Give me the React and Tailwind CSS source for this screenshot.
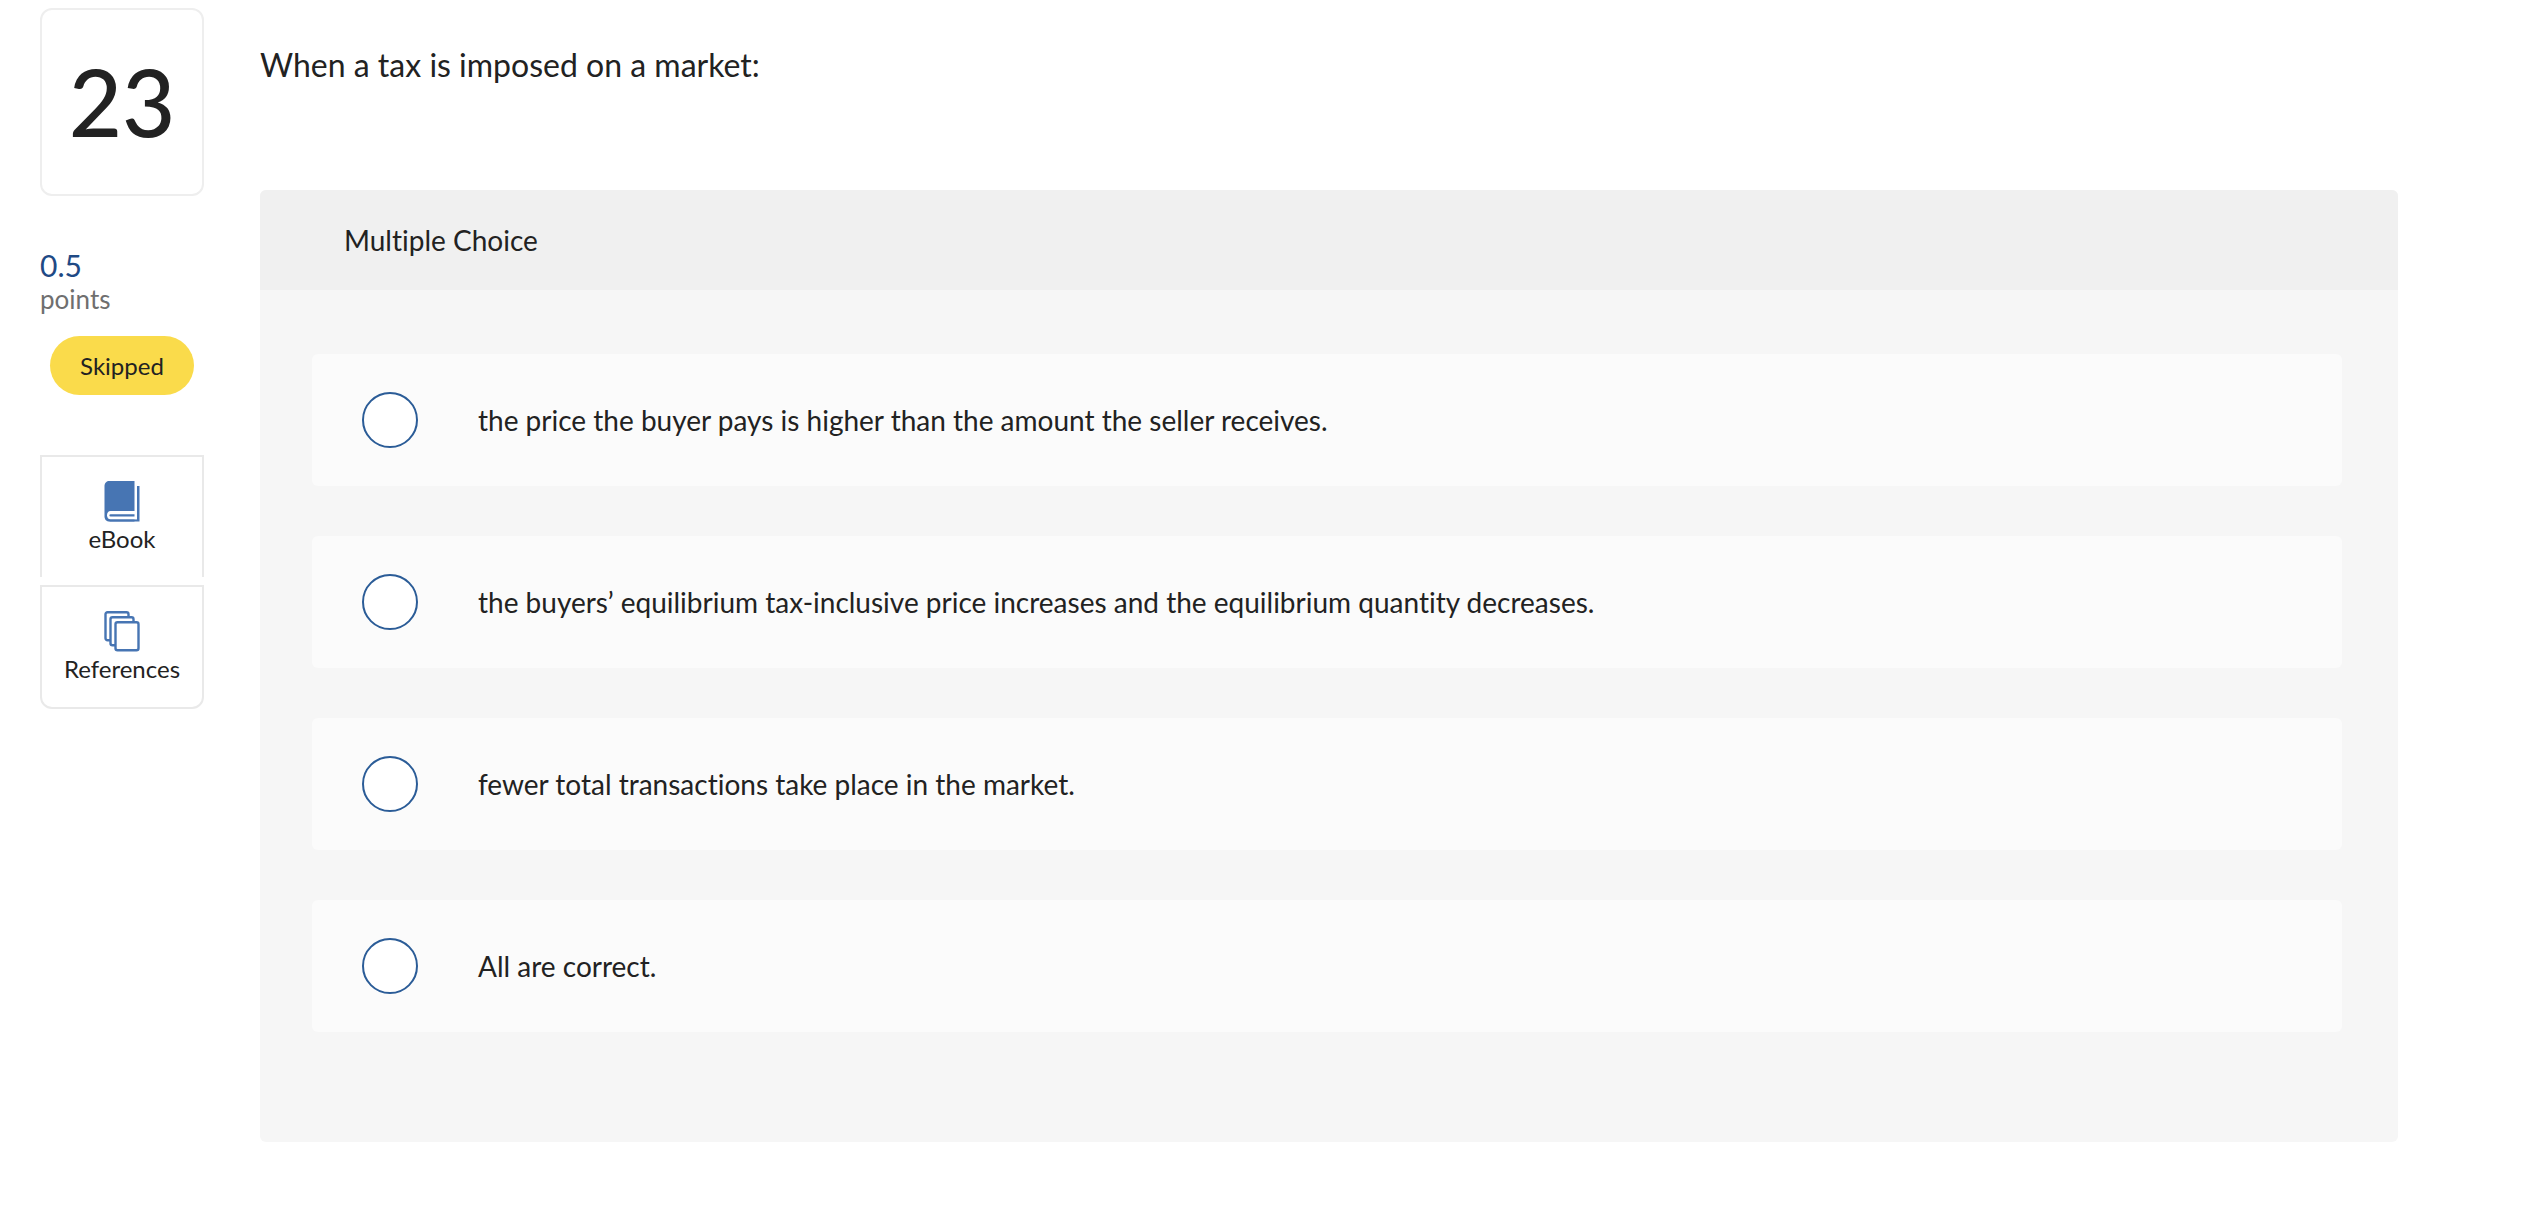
import { useState } from "react";

const OPTIONS = [
  "the price the buyer pays is higher than the amount the seller receives.",
  "the buyers’ equilibrium tax-inclusive price increases and the equilibrium quantity decreases.",
  "fewer total transactions take place in the market.",
  "All are correct.",
];

function BookIcon() {
  return (
    <svg width="36" height="42" viewBox="0 0 36 42" fill="#4775b3" aria-hidden="true">
      <path d="M5.5 0H30.5V40.5H5.5C2.5 40.5 .5 38.5 .5 35.5V5C.5 2 2.5 0 5.5 0Z" />
      <path d="M33 5H35.5V40.5H5.5V38.3H33Z" />
      <path d="M6.5 30H33V38.3H6.5C4.3 38.3 3 36.5 3 34.2C3 31.8 4.3 30 6.5 30Z" fill="#fff" />
      <path d="M6.5 33.2H30.5V35.5H6.5C5 35.5 5 33.2 6.5 33.2Z" />
    </svg>
  );
}

function PagesIcon() {
  return (
    <svg width="36" height="42" viewBox="0 0 36 42" fill="#fff" stroke="#4775b3" strokeWidth="2.4" aria-hidden="true">
      <rect x="1.5" y="1.2" width="23" height="28" rx="2" />
      <rect x="6.5" y="6.2" width="23" height="28" rx="2" />
      <rect x="11.5" y="11.2" width="23" height="28" rx="2" />
    </svg>
  );
}

function Sidebar() {
  return (
    <aside className="w-[164px] shrink-0">
      <div className="flex h-[188px] items-center justify-center rounded-xl border-2 border-[#eeeeee] text-[92px] leading-none font-medium">
        23
      </div>

      <div className="mt-[51px]">
        <div className="text-[30px] leading-[36px] text-[#1f4a85]">0.5</div>
        <div className="text-[26px] leading-8 text-[#6f6f6f]">points</div>
      </div>

      <div className="mx-[10px] mt-[21px] flex h-[59px] items-center justify-center rounded-full bg-[#fadb4b] text-[24px]">
        Skipped
      </div>

      <nav className="mt-[60px] flex flex-col gap-2">
        <button
          type="button"
          className="flex h-[122px] flex-col items-center border-2 border-b-0 border-[#e9e9e9] pt-6 text-[24px] leading-8"
        >
          <BookIcon />
          <span>eBook</span>
        </button>
        <button
          type="button"
          className="flex h-[124px] flex-col items-center rounded-b-xl border-2 border-[#e9e9e9] pt-6 text-[24px] leading-8"
        >
          <PagesIcon />
          <span>References</span>
        </button>
      </nav>
    </aside>
  );
}

export default function App() {
  const [answer, setAnswer] = useState(null);

  return (
    <div className="flex gap-14 bg-white pt-2 pr-[134px] pb-20 pl-10 font-['Lato',sans-serif] text-[#222222] [font-variant-ligatures:none]">
      <Sidebar />

      <main className="min-w-0 flex-1">
        <p className="pt-[37px] text-[32px] leading-10">
          When a tax is imposed on a market:
        </p>

        <section className="mt-[105px] overflow-hidden rounded-md bg-[#f6f6f6]">
          <h2 className="bg-[#f0f0f0] px-[84px] py-8 text-[28px] leading-9">
            Multiple Choice
          </h2>

          <div
            role="radiogroup"
            aria-label="Multiple Choice"
            className="flex flex-col gap-[50px] pt-16 pr-14 pb-[110px] pl-[52px]"
          >
            {OPTIONS.map((text, i) => (
              <label
                key={text}
                className="flex min-h-[132px] items-center gap-[60px] rounded-md bg-[#fbfbfb] px-[50px] text-[28px] leading-9"
              >
                <input
                  type="radio"
                  name="answer"
                  checked={answer === i}
                  onChange={() => setAnswer(i)}
                  className="size-14 shrink-0 appearance-none rounded-full border-2 border-[#2b5c97] bg-white checked:border-[16px]"
                />
                <span>{text}</span>
              </label>
            ))}
          </div>
        </section>
      </main>
    </div>
  );
}
